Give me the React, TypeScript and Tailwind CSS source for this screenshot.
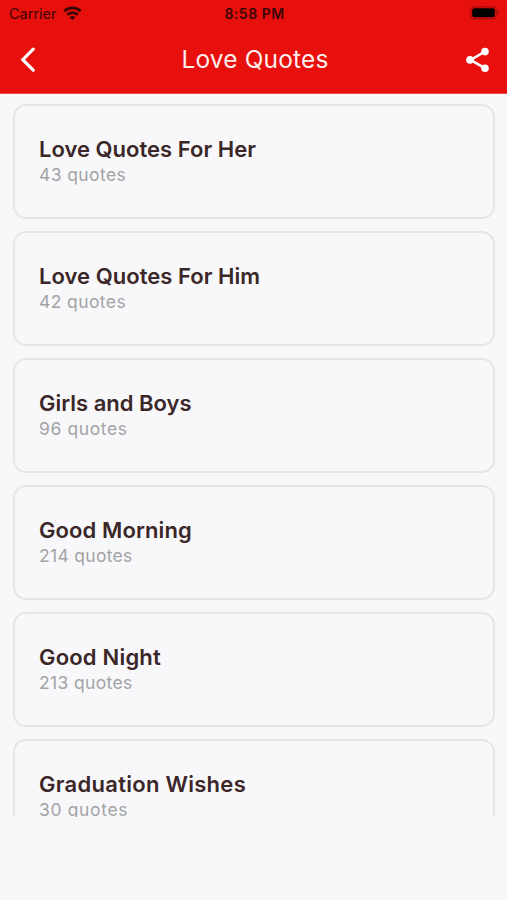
const categories = [
  { title: "Love Quotes For Her", count: 43, titleClass: "tracking-[0.02px]", countClass: "tracking-[0.4px]" },
  { title: "Love Quotes For Him", count: 42, titleClass: "tracking-[0.04px]", countClass: "tracking-[0.4px]" },
  { title: "Girls and Boys", count: 96, titleClass: "tracking-[0px]", countClass: "tracking-[0.6px]" },
  { title: "Good Morning", count: 214, titleClass: "tracking-[0.1px]", countClass: "tracking-[0.3px]" },
  { title: "Good Night", count: 213, titleClass: "tracking-[0.2px]", countClass: "tracking-[0.35px]" },
  { title: "Graduation Wishes", count: 30, titleClass: "tracking-[0.28px]", countClass: "tracking-[0.65px]" },
];

function StatusBar() {
  return (
    <div className="grid h-[27px] grid-cols-3 items-center pl-[9px] pr-[7px] text-[#3a0504]">
      <div className="flex items-center gap-[6px]">
        <span className="text-[14.5px] leading-[27px]">Carrier</span>
        <svg className="-mt-px" width="19" height="15" viewBox="0 0 19 15" fill="none" stroke="currentColor" strokeWidth="2.7">
          <path d="M1.2 5.2a12 12 0 0 1 16.6 0" />
          <path d="M4.2 8.7a7.6 7.6 0 0 1 10.6 0" />
          <path d="M9.5 14.3 6.6 11.3a4.2 4.2 0 0 1 5.8 0Z" fill="currentColor" stroke="none" />
        </svg>
      </div>
      <span className="text-center text-[14px] font-semibold leading-[27px] tracking-[0.5px]">8:58 PM</span>
      <svg className="-mt-px justify-self-end" width="30" height="14" viewBox="0 0 30 14">
        <rect x="0.8" y="0.8" width="25.4" height="12" rx="3.5" fill="none" stroke="#a50d09" strokeWidth="1.2" />
        <rect x="2.2" y="2.3" width="22.6" height="9" rx="2" fill="#000" />
        <path d="M27.4 4.6c1.6.6 1.6 3.8 0 4.4Z" fill="#8f0b08" />
      </svg>
    </div>
  );
}

function Header() {
  return (
    <div className="flex h-[67px] items-center justify-between border-b border-[#ee4a46] pl-[20px] pr-[17px]">
      <svg width="25" height="26" viewBox="0 0 25 26" fill="none" stroke="#fff" strokeWidth="3.2" strokeLinecap="round">
        <path d="M13.2 2.2 2.8 12.7l10.4 10.5" />
      </svg>
      <h1 className="-mt-px text-[24.5px] leading-[29px] tracking-[0.15px] text-[#fdeeee]">Love Quotes</h1>
      <svg width="25" height="26" viewBox="0 0 25 26" fill="#fff">
        <path d="M20.2 4.4 5.6 12.9l14.6 8.5" fill="none" stroke="#fff" strokeWidth="2.5" />
        <circle cx="20" cy="4.6" r="3.8" />
        <circle cx="5" cy="12.9" r="3.8" />
        <circle cx="20" cy="21.3" r="3.8" />
      </svg>
    </div>
  );
}

export default function App() {
  return (
    <div className="h-[900px] w-[507px] overflow-hidden bg-[#f8f8fb] font-['Inter',sans-serif]">
      <header className="h-[94px] bg-[#e8100c]">
        <StatusBar />
        <Header />
      </header>

      <main className="h-[723px] overflow-hidden pl-[13px] pr-[12px] pt-[10px]">
        <div className="flex flex-col gap-[12px]">
          {categories.map((category) => (
            <div
              key={category.title}
              className="h-[115px] shrink-0 rounded-[13px] border-2 border-[#e6e6e8] pl-[24px] pt-[28px]"
            >
              <h2 className={`text-[22px] font-semibold leading-[30px] text-[#3b2728] ${category.titleClass}`}>
                {category.title}
              </h2>
              <p className={`text-[17.5px] leading-[22px] text-[#a3a3a5] ${category.countClass}`}>
                {category.count} quotes
              </p>
            </div>
          ))}
        </div>
      </main>
    </div>
  );
}
